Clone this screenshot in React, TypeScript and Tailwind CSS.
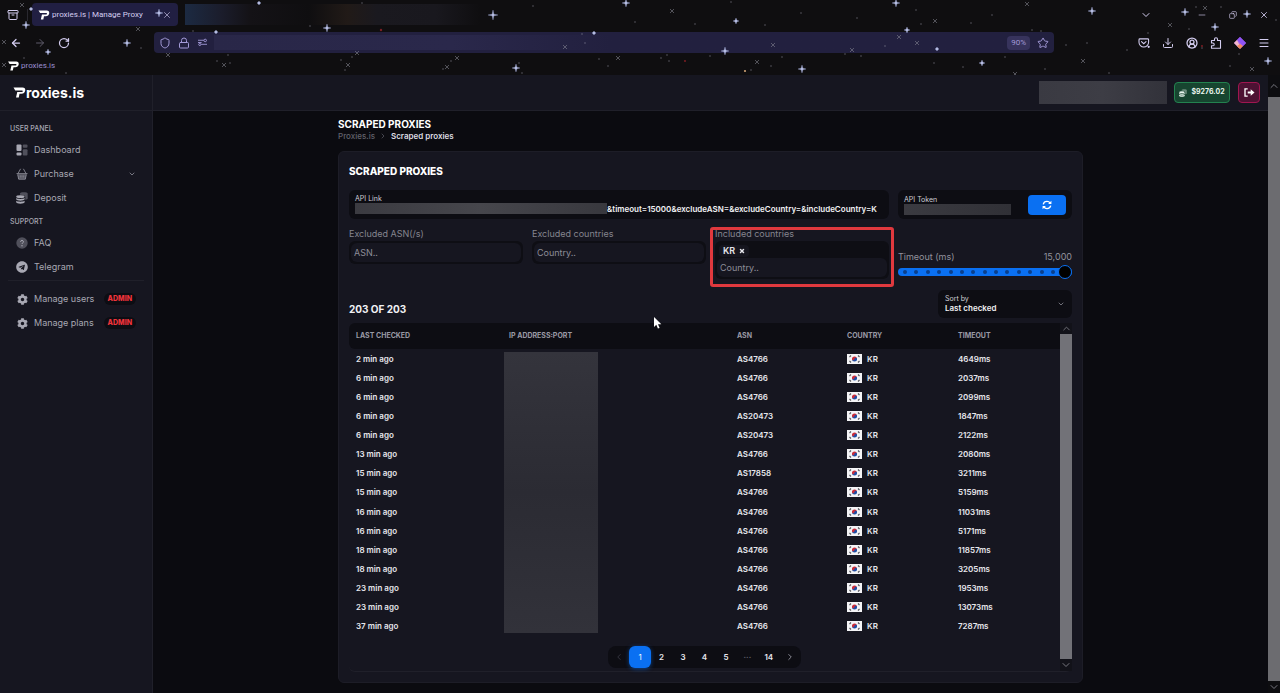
import { useState } from 'react';
import type { ReactNode } from 'react';
import {
  Archive,
  ArrowLeft,
  ArrowRight,
  ChevronDown,
  ChevronLeft,
  ChevronRight,
  ChevronUp,
  CircleUserRound,
  Copy,
  Download,
  Lock,
  Menu,
  Minus,
  RotateCw,
  Shield,
  Star,
  X,
} from 'lucide-react';
import { FaCog, FaTelegram } from 'react-icons/fa';

const PROXIES = [
  { checked: '2 min ago', asn: 'AS4766', timeout: '4649ms' },
  { checked: '6 min ago', asn: 'AS4766', timeout: '2037ms' },
  { checked: '6 min ago', asn: 'AS4766', timeout: '2099ms' },
  { checked: '6 min ago', asn: 'AS20473', timeout: '1847ms' },
  { checked: '6 min ago', asn: 'AS20473', timeout: '2122ms' },
  { checked: '13 min ago', asn: 'AS4766', timeout: '2080ms' },
  { checked: '15 min ago', asn: 'AS17858', timeout: '3211ms' },
  { checked: '15 min ago', asn: 'AS4766', timeout: '5159ms' },
  { checked: '16 min ago', asn: 'AS4766', timeout: '11031ms' },
  { checked: '16 min ago', asn: 'AS4766', timeout: '5171ms' },
  { checked: '18 min ago', asn: 'AS4766', timeout: '11857ms' },
  { checked: '18 min ago', asn: 'AS4766', timeout: '3205ms' },
  { checked: '23 min ago', asn: 'AS4766', timeout: '1953ms' },
  { checked: '23 min ago', asn: 'AS4766', timeout: '13073ms' },
  { checked: '37 min ago', asn: 'AS4766', timeout: '7287ms' },
];

const PAGES = ['1', '2', '3', '4', '5', '···', '14'];

// Night sky theme of the browser: [x, y, radius]
const BRIGHT_STARS = [
  [26, 25, 4], [127, 43, 4], [159, 13, 4], [48, 52, 3], [327, 28, 4], [493, 15, 5], [626, 3, 4],
  [516, 68, 4], [736, 21, 3], [896, 3, 4], [907, 30, 3], [725, 51, 4], [802, 69, 4], [1092, 11, 4],
  [982, 63, 3], [1185, 12, 4], [1247, 14, 4], [1215, 27, 4], [1268, 61, 4], [259, 3, 2], [216, 32, 2],
  [937, 49, 2], [594, 33, 2], [31, 9, 2],
];
const DIM_STARS = [
  [22, 5], [138, 29], [168, 55], [4, 42], [4, 65], [224, 65], [348, 65], [447, 67], [457, 58],
  [565, 47], [672, 11], [773, 45], [757, 62], [899, 37], [917, 43], [935, 21], [852, 50], [1027, 4],
  [1170, 25], [1205, 8], [1083, 61], [1015, 74], [1252, 69], [618, 58], [357, 53],
];
const DUST = [
  [66, 73], [24, 58], [141, 48], [193, 31], [217, 61], [230, 63], [228, 55], [341, 60], [352, 57],
  [345, 70], [362, 3], [451, 61], [443, 69], [519, 63], [522, 73], [582, 34], [585, 43], [533, 6],
  [635, 22], [731, 2], [801, 13], [695, 24], [765, 25], [857, 18], [916, 10], [921, 24], [667, 55],
  [661, 58], [669, 61], [710, 56], [745, 71], [751, 70], [782, 57], [771, 66], [845, 54], [861, 56],
  [934, 63], [963, 67], [992, 15], [971, 23], [1032, 30], [1041, 31], [1066, 45], [1087, 43],
  [1005, 57], [1045, 69], [1109, 73], [1127, 50], [1148, 33], [1189, 29], [1196, 7], [1221, 7],
  [1230, 66], [1239, 54], [1276, 20], [1202, 48], [310, 26], [599, 59], [608, 66], [885, 46],
];

function StarField() {
  return (
    <svg className="pointer-events-none absolute left-0 top-0" width="1280" height="75" aria-hidden="true">
      {DUST.map(([x, y]) => (
        <circle key={`${x}-${y}`} cx={x} cy={y} r="0.7" fill="#a9a9b4" opacity="0.6" />
      ))}
      {DIM_STARS.map(([x, y]) => (
        <path
          key={`${x}-${y}`}
          d={`M${x - 2} ${y - 2}l4 4M${x + 2} ${y - 2}l-4 4`}
          stroke="#8d8d9a"
          strokeWidth="0.9"
          opacity="0.6"
        />
      ))}
      {BRIGHT_STARS.map(([x, y, r]) => (
        <path
          key={`${x}-${y}`}
          d={`M${x} ${y - r}l.8 ${r - 0.8}l${r - 0.8} .8l-${r - 0.8} .8l-.8 ${r - 0.8}l-.8 -${r - 0.8}l-${r - 0.8} -.8l${r - 0.8} -.8z`}
          fill="#c3caf0"
          stroke="#a6b0e0"
          strokeWidth="0.3"
        />
      ))}
      <circle cx="381" cy="30" r="1.2" fill="#7a1f24" />
      <circle cx="685" cy="61" r="0.9" fill="#8a1f24" />
      <circle cx="745" cy="71" r="1.1" fill="#c79a6c" />
      <circle cx="1202" cy="46" r="0.9" fill="#8a1f24" />
    </svg>
  );
}

function Logo({ className }: { className?: string }) {
  return (
    <svg viewBox="0 0 24 22" className={className} fill="currentColor" aria-hidden="true">
      <path d="M0 1h18c4 0 6 2.500 5.500 6-.6 4-3.500 6.500-7.500 6.500h-4L10.500 21H5l2.500-11H17c1.200 0 1.500-.6 1.600-1.600.1-1-.4-1.600-1.500-1.600H3.500z" />
    </svg>
  );
}

function DashboardIcon() {
  return (
    <svg viewBox="0 0 12 12" className="size-3" fill="currentColor">
      <rect x="0.500" y="0.500" width="5" height="6.500" rx="1" />
      <rect x="6.800" y="5.200" width="4.700" height="6.300" rx="1" opacity="0.4" />
      <rect x="0.500" y="8.500" width="5" height="3" rx="1" />
      <rect x="6.800" y="0.500" width="4.700" height="3.200" rx="1" opacity="0.4" />
    </svg>
  );
}

function BasketIcon() {
  return (
    <svg viewBox="0 0 12 12" className="size-3" fill="none" stroke="currentColor">
      <path d="M1.500 6h9l-1 5.300h-7z" fill="currentColor" stroke="none" opacity="0.4" />
      <path d="M.5 5.600h11M2 5.500 4.600.8M10 5.500 7.400.8M1.700 6.500l1 4.700h6.600l1-4.700" strokeWidth="0.7" />
      <path d="M4.200 7.300v2.400M6 7.300v2.400M7.800 7.300v2.400" strokeWidth="0.6" />
    </svg>
  );
}

function CoinsIcon({ className }: { className: string }) {
  return (
    <svg viewBox="0 0 12 12" className={className} fill="currentColor">
      <path d="M4 1.600C4 .8 5.700.3 7.800.3s3.900.5 3.900 1.300v5c0 .7-1 1.100-2.400 1.300V5c0-1.500-2-2.300-5.300-2.300z" opacity="0.4" />
      <ellipse cx="4.400" cy="4.700" rx="4.200" ry="1.400" />
      <path d="M.2 6.100c1.500 1.200 6.900 1.200 8.400 0v1.200c0 1.900-8.400 1.900-8.400 0z" />
      <path d="M.2 8.800c1.500 1.200 6.900 1.200 8.400 0v1.400c0 1.900-8.400 1.900-8.400 0z" />
    </svg>
  );
}

function QuestionIcon() {
  return (
    <svg viewBox="0 0 12 12" className="size-3" fill="none" stroke="currentColor">
      <circle cx="6" cy="6" r="5.700" fill="currentColor" stroke="none" opacity="0.4" />
      <path d="M4.500 4.800C4.500 3 7.500 3 7.500 4.800 7.500 5.900 6 5.900 6 7" strokeWidth="1" />
      <circle cx="6" cy="8.700" r="0.700" fill="currentColor" stroke="none" />
    </svg>
  );
}

function RefreshIcon() {
  return (
    <svg viewBox="0 0 12 12" className="size-2.5" fill="none" stroke="currentColor" strokeWidth="1.600">
      <path d="M1.500 5.200C2 3 3.800 1.700 6 1.700c1.600 0 3 .8 3.800 2" />
      <path d="M10.500 6.800C10 9 8.200 10.300 6 10.300c-1.600 0-3-.8-3.800-2" />
      <path d="M11.300.8v4H7.300zM.7 11.200v-4h4z" fill="currentColor" stroke="none" />
    </svg>
  );
}

function LogoutIcon() {
  return (
    <svg viewBox="0 0 12 10" className="h-[9px] w-[11px]" fill="none" stroke="currentColor" strokeWidth="1.500">
      <path d="M4 1H1v8h3" />
      <path d="M4 5h4" strokeWidth="2.200" />
      <path d="M7.300 1.300 11.600 5 7.300 8.700z" fill="currentColor" stroke="none" />
    </svg>
  );
}

function KoreaFlag() {
  return (
    <svg viewBox="0 0 30 20" className="h-[10px] w-[15px]" aria-hidden="true">
      <rect width="30" height="20" fill="#f4f4f6" />
      <path d="M10 10a5 5 0 0 1 10 0z" fill="#cd2e3a" />
      <path d="M10 10a5 5 0 0 0 10 0z" fill="#1f4fa5" />
      <circle cx="12.500" cy="10" r="2.500" fill="#cd2e3a" />
      <circle cx="17.500" cy="10" r="2.500" fill="#1f4fa5" />
      <path d="M5 6l3-3M5 14l3 3M25 6l-3-3M25 14l-3 3" stroke="#55555c" strokeWidth="2.200" />
    </svg>
  );
}

function PocketIcon() {
  return (
    <svg viewBox="0 0 14 12" className="h-[10px] w-[12px]" fill="none" stroke="currentColor" strokeWidth="1.300">
      <path d="M2 1h9.500c.6 0 1 .4 1 1v3a5.700 5.700 0 0 1-11.500 0V2c0-.6.400-1 1-1z" />
      <path d="M4 4.300l2.700 2.500 2.700-2.500" strokeLinecap="round" />
      <circle cx="12.600" cy="10.600" r="0.700" fill="currentColor" />
    </svg>
  );
}

function PuzzleIcon() {
  return (
    <svg viewBox="0 0 12 12" className="size-3" fill="none" stroke="currentColor" strokeWidth="1.100" strokeLinejoin="round">
      <path d="M1.500 3.500H4.500V2.200a1.500 1.500 0 0 1 3 0V3.500H10.500V11.200H1.500V8.800H2.800a1.400 1.400 0 0 0 0-2.800H1.500z" />
    </svg>
  );
}

function DiamondIcon() {
  return (
    <svg viewBox="0 0 12 12" className="size-3" aria-hidden="true">
      <path d="M6 0l6 6-6 6-6-6z" fill="#b06bf0" />
      <path d="M6 0l6 6-3 3-6-6z" fill="#8f52f5" />
      <path d="M0 6l3-3 3 6-1 2z" fill="#f2b7c9" />
      <path d="M3 9l3-2 3 2-3 3z" fill="#f08a5c" />
    </svg>
  );
}

function PermissionsIcon() {
  return (
    <svg viewBox="0 0 12 10" className="h-[9px] w-[11px]" fill="none" stroke="currentColor" strokeWidth="1">
      <path d="M1 2.500h6.500M4.500 7h6.500M1 5h4" />
      <circle cx="9" cy="2.700" r="1.400" />
      <circle cx="3" cy="7.200" r="1.200" />
    </svg>
  );
}

function IconButton({ label, children }: { label: string; children: ReactNode }) {
  return (
    <button type="button" aria-label={label} className="flex size-6 items-center justify-center">
      {children}
    </button>
  );
}

function BrowserChrome() {
  return (
    <header className="relative h-[75px] bg-[#0f0e10] font-['Roboto',sans-serif] text-[#d4cdf0]">
      <StarField />
      <div className="flex h-[29px] items-center">
        <div className="flex w-7 justify-center border-r border-[#29282f] pr-0.5">
          <button type="button" aria-label="Recent browsing">
            <Archive className="size-3" strokeWidth={2} />
          </button>
        </div>
        <div className="ml-1 flex h-[23px] w-[146px] items-center gap-0.5 rounded bg-[#211f42] px-1.5">
          <Logo className="h-[10px] w-3 text-white" />
          <span className="flex-1 whitespace-nowrap text-[8px]">proxies.is | Manage Proxy</span>
          <button type="button" aria-label="Close tab">
            <X className="size-2.5" strokeWidth={1.5} />
          </button>
        </div>
        <div className="ml-[7px] h-[21px] w-[295px] bg-[linear-gradient(90deg,#1c2a42_0%,#1b1d2c_12%,#141216_22%,#0f0e10_42%,#211a17_55%,#1a191f_65%,#19181e_85%,#0f0e10_100%)]" />
        <div className="ml-auto flex items-center gap-[7px] pr-1">
          <div className="mr-[25px] flex">
            <IconButton label="List all tabs">
              <ChevronDown className="size-3" />
            </IconButton>
          </div>
          <IconButton label="Minimize">
            <Minus className="size-2.5" strokeWidth={1.5} />
          </IconButton>
          <IconButton label="Restore">
            <Copy className="size-2 -scale-x-100" strokeWidth={2} />
          </IconButton>
          <IconButton label="Close">
            <X className="size-2.5" strokeWidth={2} />
          </IconButton>
        </div>
      </div>
      <div className="flex h-[27px] items-center">
        <div className="flex w-[154px] items-center pl-1">
          <IconButton label="Back">
            <ArrowLeft className="size-3" strokeWidth={2.5} />
          </IconButton>
          <IconButton label="Forward">
            <ArrowRight className="size-3 opacity-40" />
          </IconButton>
          <IconButton label="Reload">
            <RotateCw className="size-3" strokeWidth={2.5} />
          </IconButton>
        </div>
        <div className="flex h-[21px] flex-1 items-center rounded-sm bg-[#22203f] text-[#a39ad8]">
          <div className="flex w-[60px] items-center gap-[7px] pl-[5px]">
            <Shield className="size-3" />
            <Lock className="size-3" />
            <PermissionsIcon />
          </div>
          <div className="h-[15px] flex-1 bg-gradient-to-r from-[#292748] via-[#2a284b] via-30% to-[#22203f] to-50%" />
          <button type="button" className="h-[14px] rounded-sm bg-[#37335c] px-1 text-[8px] leading-[14px]">
            90%
          </button>
          <button type="button" aria-label="Bookmark this page" className="pl-[7px] pr-[5px]">
            <Star className="size-3" />
          </button>
        </div>
        <div className="ml-[78px] flex pr-1">
          <IconButton label="Save to Pocket">
            <PocketIcon />
          </IconButton>
          <IconButton label="Downloads">
            <Download className="size-3" />
          </IconButton>
          <IconButton label="Account">
            <CircleUserRound className="size-3" strokeWidth={2.5} />
          </IconButton>
          <IconButton label="Extensions">
            <PuzzleIcon />
          </IconButton>
          <IconButton label="Wallet">
            <DiamondIcon />
          </IconButton>
          <IconButton label="Open menu">
            <Menu className="size-3" />
          </IconButton>
        </div>
      </div>
      <div className="flex h-[19px] items-center gap-0.5 pl-2">
        <Logo className="h-[10px] w-[11px] text-white" />
        <a href="#" className="text-[8px] text-[#9a8fd0]">proxies.is</a>
      </div>
    </header>
  );
}

function SideItem({ icon, label, children }: { icon: ReactNode; label: string; children?: ReactNode }) {
  return (
    <a href="#" className="flex h-6 items-center gap-1.5 whitespace-nowrap pl-4 pr-4">
      <span className="flex w-3 justify-center">{icon}</span>
      <span>{label}</span>
      {children}
    </a>
  );
}

function AdminBadge() {
  return (
    <span className="ml-auto rounded-full bg-[#0d0d13] px-1 text-[7px] font-extrabold leading-3 text-[#f0343c]">
      ADMIN
    </span>
  );
}

function Sidebar() {
  return (
    <aside className="w-[153px] shrink-0 border-r border-[#20202a] bg-[#161620] text-[9px] text-[#a8a8b3]">
      <div className="flex h-9 items-center border-b border-[#20202a] pl-[13px] text-white">
        <Logo className="h-[11px] w-[13px]" />
        <span className="text-[14px] font-bold">roxies.is</span>
      </div>
      <nav>
        <h2 className="mb-[3px] mt-3 pl-2.5 text-[7px] font-medium leading-3">USER PANEL</h2>
        <SideItem icon={<DashboardIcon />} label="Dashboard" />
        <SideItem icon={<BasketIcon />} label="Purchase">
          <ChevronDown className="ml-auto size-2" />
        </SideItem>
        <SideItem icon={<CoinsIcon className="size-3" />} label="Deposit" />
        <h2 className="mb-[3px] mt-1.5 pl-2.5 text-[7px] font-medium leading-3">SUPPORT</h2>
        <SideItem icon={<QuestionIcon />} label="FAQ" />
        <SideItem icon={<FaTelegram className="size-3" />} label="Telegram" />
        <hr className="mx-2 mb-1.5 mt-px border-[#20202a]" />
        <SideItem icon={<FaCog className="size-[11px]" />} label="Manage users">
          <AdminBadge />
        </SideItem>
        <SideItem icon={<FaCog className="size-[11px]" />} label="Manage plans">
          <AdminBadge />
        </SideItem>
      </nav>
    </aside>
  );
}

function TagField({ id, label, placeholder, tag }: { id: string; label: string; placeholder: string; tag?: string }) {
  return (
    <div className="flex flex-col">
      <label htmlFor={id} className="mb-px leading-3 text-[#85858f]">{label}</label>
      <div className="rounded-md bg-[#0e0e14] p-0.5">
        {tag && (
          <div className="flex h-[15px] items-center pl-0.5">
            <span className="flex items-center gap-1 rounded bg-[#15151e] px-1 font-semibold leading-3 text-[#e4e4ea]">
              {tag}
              <button type="button" aria-label={`Remove ${tag}`}>
                <X className="size-[6px]" strokeWidth={6} />
              </button>
            </span>
          </div>
        )}
        <input
          id={id}
          placeholder={placeholder}
          className="block h-[19px] w-full rounded-md bg-[#161620] px-[3px] outline-none placeholder:text-[#8d8d98]"
        />
      </div>
    </div>
  );
}

function Filters() {
  const [timeout, setTimeoutMs] = useState(15000);

  return (
    <div className="grid grid-cols-4 gap-[9px]">
      <div className="col-span-3 h-[29px] rounded-md bg-[#0d0d13] px-1.5 pt-1">
        <label htmlFor="api-link" className="block text-[7px] leading-[9px] text-[#cfcfd6]">API Link</label>
        <div className="flex h-[11px] items-center">
          <span className="h-[11px] flex-1 bg-gradient-to-r from-[#3b3b41] via-[#46464c] to-[#38383e]" />
          <input
            id="api-link"
            readOnly
            value="&timeout=15000&excludeASN=&excludeCountry=&includeCountry=K"
            className="w-[276px] bg-transparent text-[8px] font-semibold text-[#f1f1f4] outline-none"
          />
        </div>
      </div>
      <div className="flex h-[29px] items-center justify-between rounded-md bg-[#0d0d13] px-1.5">
        <div>
          <p className="text-[7px] leading-[9px] text-[#cfcfd6]">API Token</p>
          <div className="h-[11px] w-[107px] bg-gradient-to-r from-[#3b3b41] to-[#303036]" />
        </div>
        <button
          type="button"
          aria-label="Refresh token"
          className="flex h-5 w-[38px] items-center justify-center rounded bg-[#0a70f2] text-white"
        >
          <RefreshIcon />
        </button>
      </div>

      <TagField id="ex-asn" label="Excluded ASN(/s)" placeholder="ASN.." />
      <TagField id="ex-country" label="Excluded countries" placeholder="Country.." />
      <div className="relative">
        <TagField id="in-country" label="Included countries" placeholder="Country.." tag="KR" />
        <div className="pointer-events-none absolute -inset-x-[5px] -bottom-2 -top-px rounded-[3px] border-[3px] border-[#e0393e]" />
      </div>
      <div className="flex flex-col justify-end">
        <div className="mb-0.5 flex justify-between leading-3 text-[#92929d]">
          <label htmlFor="timeout">Timeout (ms)</label>
          <span>{timeout.toLocaleString('en-US')}</span>
        </div>
        <div className="grid items-center">
          <div className="col-start-1 row-start-1 flex h-2 items-center justify-between rounded-full bg-[#0a70f2] pl-[5px] pr-[17px]">
            {Array.from({ length: 14 }, (_, i) => (
              <span key={i} className="size-1 rounded-full bg-[#0a3f8c]" />
            ))}
          </div>
          <input
            id="timeout"
            type="range"
            min={1000}
            max={15000}
            step={1000}
            value={timeout}
            onChange={(e) => setTimeoutMs(Number(e.target.value))}
            className="col-start-1 row-start-1 h-[14px] w-full appearance-none bg-transparent [&::-webkit-slider-thumb]:size-[14px] [&::-webkit-slider-thumb]:appearance-none [&::-webkit-slider-thumb]:rounded-full [&::-webkit-slider-thumb]:border [&::-webkit-slider-thumb]:border-[#0a70f2] [&::-webkit-slider-thumb]:bg-black"
          />
        </div>
      </div>
    </div>
  );
}

function ProxyTable() {
  return (
    <div className="mt-[5px] flex rounded-md border-b border-[#20202a]">
      <div className="flex-1">
        <table className="h-[313px] w-full table-fixed text-left text-[8px] font-semibold text-[#e6e6ec]">
          <thead className="text-[7px] text-[#9a9aa5]">
            <tr className="h-[26px] bg-[#0d0d13]">
              <th className="w-[153px] rounded-l-md pl-[7px] font-bold">LAST CHECKED</th>
              <th className="w-[228px] pl-[7px] font-bold">IP ADDRESS:PORT</th>
              <th className="w-[110px] pl-[7px] font-bold">ASN</th>
              <th className="w-[111px] pl-[7px] font-bold">COUNTRY</th>
              <th className="pl-[7px] font-bold">TIMEOUT</th>
            </tr>
          </thead>
          <tbody>
            {PROXIES.map((proxy, i) => (
              <tr key={i} className="h-[19px]">
                <td className="pl-[7px]">{proxy.checked}</td>
                {i === 0 && (
                  <td rowSpan={PROXIES.length} className="pl-0.5">
                    <div className="h-[281px] w-[94px] bg-gradient-to-b from-[#34343c] via-[#2b2b33] to-[#32323a]" />
                  </td>
                )}
                <td className="pl-[7px]">{proxy.asn}</td>
                <td className="pl-[7px]">
                  <span className="flex items-center gap-[5px] leading-3">
                    <KoreaFlag />
                    KR
                  </span>
                </td>
                <td className="pl-[7px]">{proxy.timeout}</td>
              </tr>
            ))}
          </tbody>
        </table>
        <nav
          aria-label="Pagination"
          className="mx-auto mb-[3px] mt-2.5 grid h-[22px] w-[193px] grid-cols-9 items-center rounded-lg bg-[#0d0d13] text-[8px] font-semibold text-[#e6e6ec]"
        >
          <button type="button" aria-label="Previous page" className="flex justify-center text-[#3a3a44]">
            <ChevronLeft className="size-2.5" />
          </button>
          {PAGES.map((page) => (
            <button
              key={page}
              type="button"
              className={
                page === '1'
                  ? 'h-[22px] rounded-md bg-[#0a70f2] font-normal text-white shadow-[0_1px_4px_#0a70f280]'
                  : page === '···'
                    ? 'text-[#5b5b66]'
                    : ''
              }
            >
              {page}
            </button>
          ))}
          <button type="button" aria-label="Next page" className="flex justify-center text-[#a0a0ab]">
            <ChevronRight className="size-2.5" />
          </button>
        </nav>
      </div>
      <div className="flex w-3 flex-col items-center bg-[#121219] text-[#77777f]">
        <ChevronUp className="size-[11px]" />
        <div className="w-full flex-1 bg-[#727278]" />
        <ChevronDown className="size-3" />
      </div>
    </div>
  );
}

function Content() {
  return (
    <main className="flex-1 px-4 pb-2.5 pt-[7px]">
      <div className="mx-auto max-w-[745px] text-[9px]">
        <h1 className="text-[10px] font-bold leading-3 text-white">SCRAPED PROXIES</h1>
        <nav aria-label="Breadcrumb" className="flex items-center gap-1 text-[8px] font-medium leading-3 text-[#62626c]">
          <a href="#">Proxies.is</a>
          <ChevronRight className="size-2" />
          <span className="font-semibold text-[#dcdce2]">Scraped proxies</span>
        </nav>
        <section className="relative mt-[9px] rounded-md border border-[#1d1d27] bg-[#161620] p-2.5">
          <h2 className="mb-2.5 text-[10px] font-extrabold leading-[18px] text-white">SCRAPED PROXIES</h2>
          <Filters />
          <div className="mt-[11px] flex h-7 items-center justify-between">
            <h3 className="pt-2.5 text-[10px] font-bold text-[#f1f1f4]">203 OF 203</h3>
            <div className="grid h-7 w-[134px] grid-cols-[1fr_auto] items-center rounded-md bg-[#0d0d13] px-[7px]">
              <div>
                <label htmlFor="sort" className="block text-[7px] leading-[9px] text-[#cfcfd6]">Sort by</label>
                <select
                  id="sort"
                  className="block w-full appearance-none bg-transparent text-[8px] font-semibold leading-[11px] text-[#f1f1f4] outline-none"
                >
                  <option>Last checked</option>
                </select>
              </div>
              <ChevronDown className="size-2 text-[#a0a0ab]" />
            </div>
          </div>
          <ProxyTable />
          {/* Mouse pointer */}
          <svg viewBox="0 0 8 12" className="pointer-events-none absolute left-[315px] top-[165px] h-3 w-2" aria-hidden="true">
            <path d="M0 0v10l2.300-2.200L3.900 11.600l1.700-.7L4 7.300h3.300z" fill="#fff" />
          </svg>
        </section>
      </div>
    </main>
  );
}

export default function App() {
  return (
    <div className="flex min-h-screen flex-col bg-[#0b0b10] font-['Inter',sans-serif]">
      <BrowserChrome />
      <div className="flex flex-1">
        <Sidebar />
        <div className="flex flex-1 flex-col">
          <div className="flex h-9 items-center justify-end gap-[7px] border-b border-[#20202a] bg-[#161620] pr-2">
            <div className="h-[23px] w-32 bg-gradient-to-r from-[#3a3a42] via-[#3d3d45] to-[#32323a]" />
            <button
              type="button"
              className="flex h-[21px] w-14 items-center justify-center gap-1 whitespace-nowrap rounded border border-[#23824f] bg-[#174530] text-[7px] font-bold text-[#eaf5ee]"
            >
              <CoinsIcon className="size-2" />
              $9276.02
            </button>
            <button
              type="button"
              aria-label="Log out"
              className="ml-px flex h-[21px] w-[22px] items-center justify-center rounded border border-[#a01650] bg-[#4d1233] text-white"
            >
              <LogoutIcon />
            </button>
          </div>
          <Content />
        </div>
        <div className="flex w-3 flex-col items-center bg-[#0d0d10] text-[#77777f]">
          <ChevronUp className="my-[5px] size-3" />
          <div className="w-full flex-1 bg-[#6c6c70]" />
          <ChevronDown className="size-3" />
        </div>
      </div>
    </div>
  );
}
